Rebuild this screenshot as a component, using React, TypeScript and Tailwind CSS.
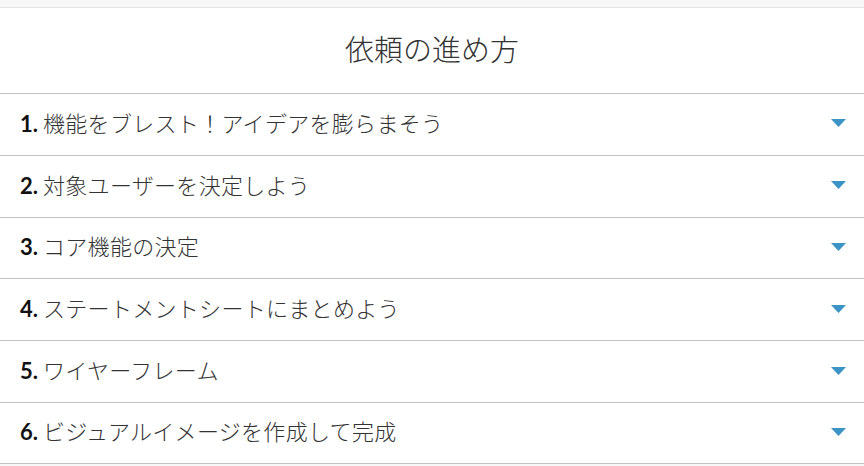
const steps = [
  "機能をブレスト！アイデアを膨らまそう",
  "対象ユーザーを決定しよう",
  "コア機能の決定",
  "ステートメントシートにまとめよう",
  "ワイヤーフレーム",
  "ビジュアルイメージを作成して完成",
];

function Caret() {
  return (
    <svg width="15" height="8" viewBox="0 0 15 8" className="shrink-0">
      <path d="M0 0h15L7.5 8z" fill="#3b93c6" />
    </svg>
  );
}

export default function App() {
  return (
    <div className="min-h-[466px] w-[864px] bg-[#f7f7f7] pt-[7px] font-['Lato','Noto_Sans_CJK_JP',sans-serif]">
      <div className="border-t border-[#e3e3e3] bg-white">
        <h2 className="flex h-[85px] items-center justify-center pb-[2px] text-[29px] font-light text-[#333]">
          依頼の進め方
        </h2>
        <ul>
          {steps.map((s, i) => (
            <li
              key={s}
              className="flex h-[61.8px] items-center justify-between border-t border-[#c2c2c2] pb-[2px] pl-5 pr-[18px] last:border-b"
            >
              <span className="flex items-baseline text-[22px] text-[#333]">
                <b className="mr-[5px] font-bold text-[#111]">{i + 1}.</b>
                <span className="font-light tracking-[0.3px]">{s}</span>
              </span>
              <Caret />
            </li>
          ))}
        </ul>
      </div>
    </div>
  );
}
